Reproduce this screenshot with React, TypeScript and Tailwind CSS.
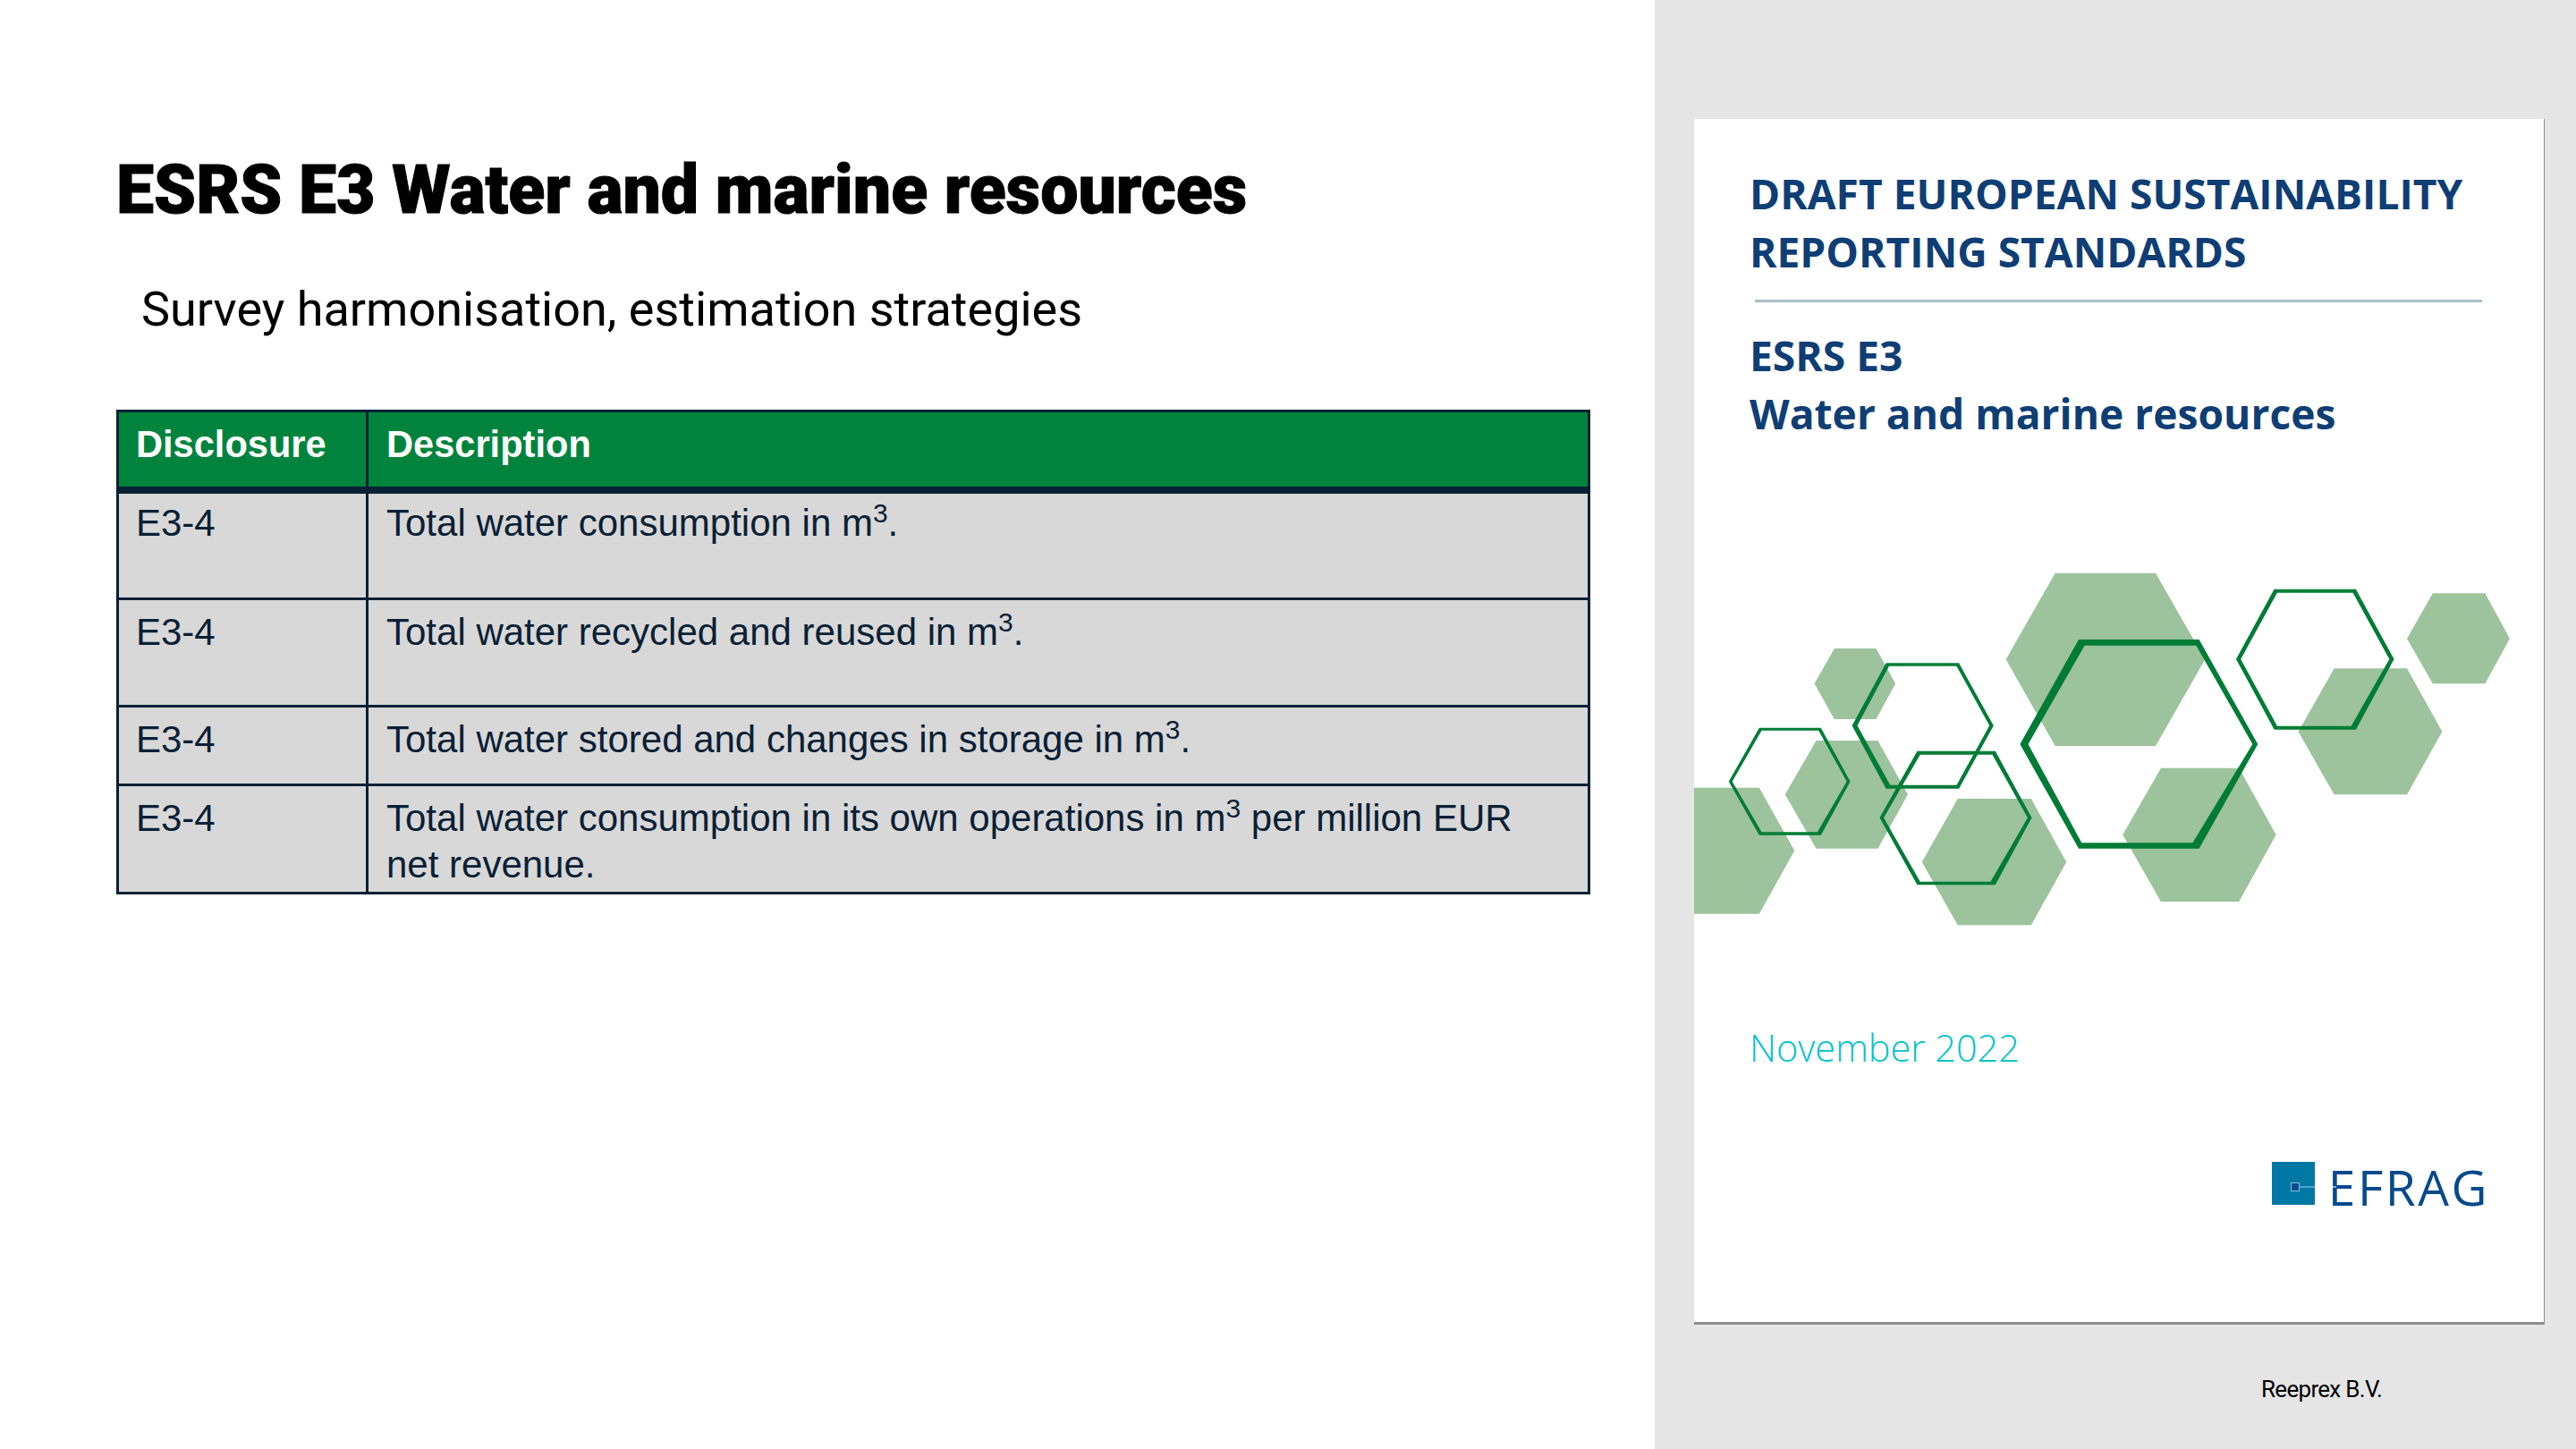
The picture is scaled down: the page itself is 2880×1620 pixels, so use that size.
const Cube = () => <sup className="text-[30px]">3</sup>;

const rows = [
  { id: 'E3-4', h: 'h-[119px]', pad: 'pt-[7px]', text: <>Total water consumption in m<Cube />.</> },
  { id: 'E3-4', h: 'h-[120px]', pad: 'pt-[10px]', text: <>Total water recycled and reused in m<Cube />.</> },
  { id: 'E3-4', h: 'h-[88px]', pad: 'pt-[10px]', text: <>Total water stored and changes in storage in m<Cube />.</> },
  {
    id: 'E3-4',
    h: 'h-[118px]',
    pad: 'pt-[10px]',
    text: <>Total water consumption in its own operations in m<Cube /> per million EUR net revenue.</>,
  },
];

// coordinates are in one shared space, stretched to the 950x480 box of the svg
const solid = [
  '682,122 853,122 937,412 853,702 682,702 598,412',
  '1325,190 1414,190 1456,342 1414,493 1325,493 1281,342',
  '1157,442 1281,442 1341,654 1281,865 1157,865 1096,654',
  '306,375 377,375 410,493 377,612 306,612 272,493',
  '275,684 380,684 431,865 380,1046 275,1046 222,865',
  '67,842 178,842 238,1053 178,1265 67,1265',
  '516,879 641,879 701,1091 641,1303 516,1303 455,1091',
  '862,776 995,776 1058,1000 995,1224 862,1224 797,1000',
];

const outlines = [
  'M722 345H927L1027 696L927 1046H722L622 696ZM732 365L636 696L727 1027H916L1018 696L922 365Z',
  'M1055 176H1194L1259 411L1194 647H1055L990 411ZM1060 188L998 411L1060 635H1186L1251 411L1189 188Z',
  'M394 424H518L577 634L518 845H394L336 634ZM399 434L345 634L401 833H514L570 634L514 434Z',
  'M178 641H283L333 821L283 1001H178L126 821ZM182 650L132 821L182 991H277L327 821L279 650Z',
  'M447 719H580L642 943L580 1168H447L383 943ZM452 731L390 943L452 1157H572L635 943L575 731Z',
];

function Hexagons() {
  return (
    <svg viewBox="67 0 1447 1440" preserveAspectRatio="none" className="block h-[480px] w-[950px]">
      {solid.map((points) => (
        <polygon key={points} points={points} fill="#9cc39c" />
      ))}
      {outlines.map((d) => (
        <path key={d} d={d} fill="#007c36" fillRule="evenodd" />
      ))}
    </svg>
  );
}

function EfragLogo() {
  return (
    <div className="flex items-end justify-end gap-[15px] pr-[61px]">
      <svg viewBox="0 0 48 48" className="relative z-10 h-[48px] w-[48px] overflow-visible">
        <rect width="48" height="48" fill="#0078a6" />
        <rect x="21.5" y="23.5" width="9" height="9" fill="#0b4a8c" stroke="#7cc4d8" strokeWidth="1" />
        <rect x="31" y="27.5" width="17" height="1" fill="#9fd3e0" />
        <rect x="48" y="27.5" width="24" height="1" fill="#ffffff" />
      </svg>
      <span className="font-['Open_Sans',sans-serif] text-[55px] leading-[40px] tracking-[2.5px] text-[#064a8c]">
        EFRAG
      </span>
    </div>
  );
}

export default function App() {
  return (
    <div className="flex h-[1620px] w-[2880px] overflow-hidden bg-white">
      <main className="w-[1850px] pl-[130px] font-['Roboto',sans-serif] text-black">
        <h1 className="mt-[168px] text-[75.2px] leading-[88px] font-black [-webkit-text-stroke:1px_black]">
          ESRS E3 Water and marine resources
        </h1>
        <p className="mt-[55px] pl-[28px] text-[54px] leading-[70px]">Survey harmonisation, estimation strategies</p>

        <div className="mt-[77px] w-[1648px] border-[3px] border-[#0a2035] font-['Liberation_Sans',sans-serif] text-[42px] leading-[52px]">
          <div className="grid h-[91px] grid-cols-[279px_1fr] border-b-[8px] border-[#0a2035] bg-[#00843d] text-[41.6px] font-bold text-white">
            <div className="border-r-[3px] border-[#0a2035] px-[19px] pt-[10px]">Disclosure</div>
            <div className="px-[20px] pt-[10px]">Description</div>
          </div>
          {rows.map((row, i) => (
            <div
              key={i}
              className={`grid grid-cols-[279px_1fr] border-[#0a2035] bg-[#d8d8d8] text-[#0a2035] not-last:border-b-[3px] ${row.h}`}
            >
              <div className={`border-r-[3px] border-[#0a2035] px-[19px] ${row.pad}`}>{row.id}</div>
              <div className={`px-[20px] ${row.pad}`}>{row.text}</div>
            </div>
          ))}
        </div>
      </main>

      <aside className="flex w-[1030px] flex-col bg-[#e5e5e5] pt-[133px] pl-[44px]">
        <div className="h-[1348px] w-[951px] border-r border-b-[3px] border-[#8c8c8c] bg-white">
          <div className="pt-[51px] pl-[62px] font-['Open_Sans',sans-serif] text-[46.2px] leading-[65px] font-bold text-[#0f3e75]">
            <p>DRAFT EUROPEAN SUSTAINABILITY</p>
            <p>REPORTING STANDARDS</p>
            <div className="mt-[21px] ml-[6px] h-[3px] w-[813px] bg-[#a9bcc4]" />
            <p className="mt-[27px]">ESRS E3</p>
            <p>Water and marine resources</p>
          </div>
          <div className="mt-[105px]">
            <Hexagons />
          </div>
          <p className="mt-[61px] pl-[62px] font-['Open_Sans',sans-serif] text-[41.5px] leading-[60px] font-light text-[#00c4cc]">
            November 2022
          </p>
          <div className="mt-[98px]">
            <EfragLogo />
          </div>
        </div>
        <p className="mt-[55px] pl-[634px] font-['Roboto',sans-serif] text-[26px] leading-[34px] tracking-[-0.7px] text-black">
          Reeprex B.V.
        </p>
      </aside>
    </div>
  );
}
